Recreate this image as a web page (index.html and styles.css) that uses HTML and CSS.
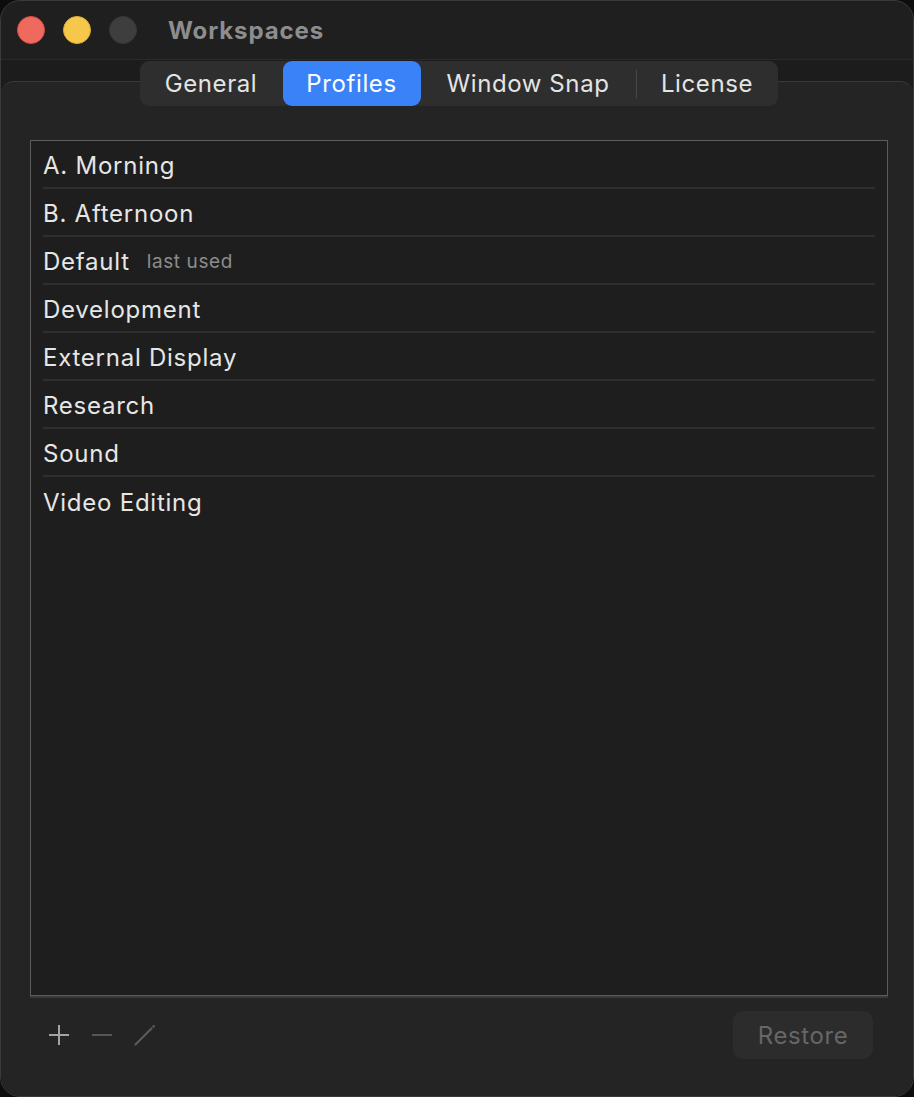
FILE: index.html
```html
<!DOCTYPE html>
<html>
<head>
<meta charset="utf-8">
<link rel="stylesheet" href="styles.css">
</head>
<body>
<div class="window">
  <div class="titlebar">
    <div class="lights">
      <span class="light red"></span>
      <span class="light yellow"></span>
      <span class="light gray"></span>
    </div>
    <div class="title">Workspaces</div>
  </div>
  <div class="body">
    <div class="tabs">
      <div class="tab t-general">General</div>
      <div class="tab t-profiles active">Profiles</div>
      <div class="tab t-snap">Window Snap</div>
      <div class="tab-sep"></div>
      <div class="tab t-license">License</div>
    </div>
    <div class="panel">
      <div class="listwrap">
        <div class="list">
          <div class="row"><span class="name">A. Morning</span></div>
          <div class="row"><span class="name">B. Afternoon</span></div>
          <div class="row"><span class="name">Default</span><span class="hint">last used</span></div>
          <div class="row"><span class="name">Development</span></div>
          <div class="row"><span class="name">External Display</span></div>
          <div class="row"><span class="name">Research</span></div>
          <div class="row"><span class="name">Sound</span></div>
          <div class="row last"><span class="name">Video Editing</span></div>
        </div>
      </div>
      <div class="bottombar">
        <div class="tools">
          <svg class="tool" width="22" height="22" viewBox="0 0 22 22"><path d="M11 1v20M1 11h20" stroke="#a3a3a3" stroke-width="2" fill="none"/></svg>
          <svg class="tool" width="22" height="22" viewBox="0 0 22 22"><path d="M1 11h20" stroke="#565656" stroke-width="2" fill="none"/></svg>
          <svg class="tool" width="22" height="22" viewBox="0 0 22 22"><path d="M1.5 20.5L17.5 4.5" stroke="#5a5a5a" stroke-width="2.2" stroke-linecap="round" fill="none"/><circle cx="19.6" cy="2.4" r="1.3" fill="#5a5a5a"/></svg>
        </div>
        <div class="restore">Restore</div>
      </div>
    </div>
  </div>
</div>
</body>
</html>
```
FILE: styles.css
```css
* { box-sizing: border-box; }
html, body { margin: 0; padding: 0; background: #0d0d0d; }
body {
  font-family: Inter, "Liberation Sans", sans-serif;
  width: 914px;
  height: 1097px;
  overflow: hidden;
}
.window {
  width: 914px;
  height: 1097px;
  border: 1px solid #3a3a3a;
  border-radius: 20px;
  background: #1f1f1f;
  overflow: hidden;
  display: flex;
  flex-direction: column;
}
.titlebar {
  height: 59px;
  flex: none;
  display: flex;
  align-items: center;
  border-bottom: 1px solid #2a2a2a;
  padding-left: 16px;
}
.lights { display: flex; gap: 18px; }
.light {
  width: 28px; height: 28px; border-radius: 50%;
  display: block;
}
.red { background: #ee6a5f; border: 1px solid #d94c42; }
.yellow { background: #f5c84c; border: 1px solid #dcae33; }
.gray { background: #3e3e3e; border: 1px solid #383838; }
.title {
  margin-left: 31px;
  font-size: 24px;
  font-weight: 700;
  color: #8d8d8d;
  letter-spacing: 0.9px;
}
.body {
  flex: 1;
  background: #1c1c1c;
  display: flex;
  flex-direction: column;
  min-height: 0;
}
.tabs {
  position: relative;
  z-index: 2;
  align-self: center;
  margin-top: 1px;
  margin-left: 3px;
  height: 45px;
  display: flex;
  align-items: center;
  background: #2e2e2e;
  border-radius: 9px;
  flex: none;
}
.tab {
  height: 45px;
  display: flex;
  align-items: center;
  justify-content: center;
  font-size: 24px;
  letter-spacing: 0.6px;
  color: #e4e4e4;
  border-radius: 9px;
}
.t-general { width: 143px; }
.t-profiles { width: 138px; }
.t-snap { width: 215px; }
.t-license { width: 141px; }
.tab.active { background: #3a82f7; color: #ffffff; }
.tab-sep { width: 1px; height: 28px; background: #474747; }
.panel {
  flex: 1;
  margin-top: -25px;
  background: #242424;
  border-top: 1px solid #3a3a3a;
  border-radius: 13px 13px 0 0;
  padding: 58px 25px 37px 29px;
  display: flex;
  flex-direction: column;
  min-height: 0;
}
.listwrap {
  flex: 1;
  border-bottom: 2px solid #3a3a3a;
  display: flex;
  min-height: 0;
}
.list {
  flex: 1;
  border: 1px solid #5c5c5c;
  background: #1e1e1e;
  padding: 0 12px 0 12px;
}
.row {
  height: 48px;
  border-bottom: 2px solid #2f2f2f;
  display: flex;
  align-items: center;
  padding-top: 2px;
}
.row.last { border-bottom: none; }
.name { font-size: 24px; color: #e6e6e6; letter-spacing: 0.75px; }
.hint { font-size: 19px; color: #8c8c8c; margin-left: 17px; padding-top: 1px; letter-spacing: 0.6px; }
.bottombar {
  flex: none;
  margin-top: 13px;
  height: 48px;
  display: flex;
  align-items: center;
  justify-content: space-between;
}
.tools { display: flex; gap: 21px; padding-left: 18px; }
.tool { display: block; }
.restore {
  width: 140px;
  height: 48px;
  margin-right: 15px;
  border-radius: 10px;
  background: #2c2c2c;
  color: #666666;
  font-size: 24px;
  letter-spacing: 0.6px;
  display: flex;
  align-items: center;
  justify-content: center;
}
```
